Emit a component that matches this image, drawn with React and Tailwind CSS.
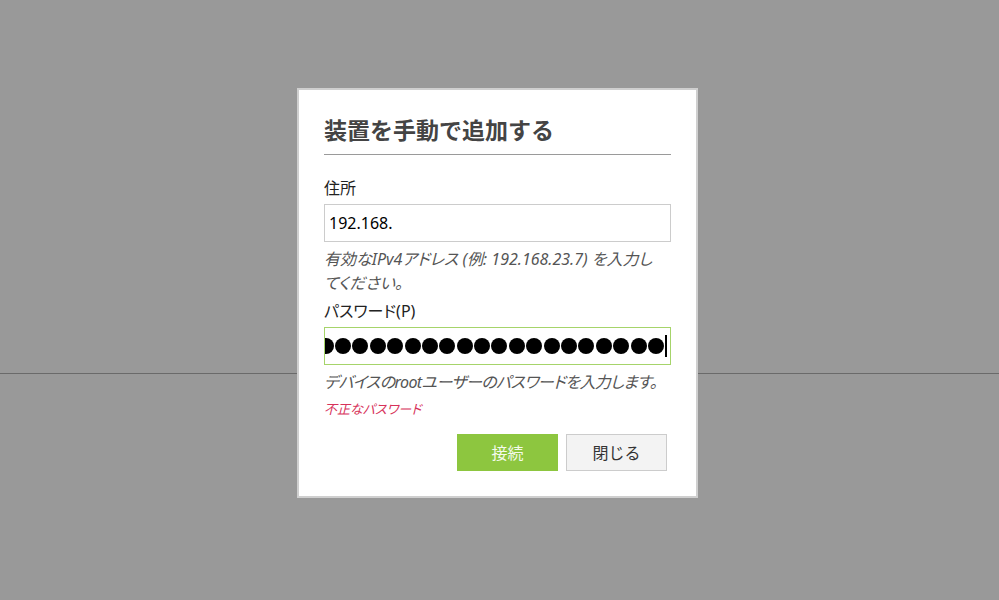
import React from "react";

const font = { fontFamily: '"Noto Sans", "Noto Sans CJK JP", sans-serif' };

const Dots = ({ count }) => (
  <div className="flex items-center gap-[1.4px] shrink-0">
    {Array.from({ length: count }).map((_, i) => (
      <span key={i} className="block w-[16px] h-[16px] rounded-full bg-black shrink-0" />
    ))}
  </div>
);

const App = () => {
  return (
    <div
      className="relative w-full h-[600px] bg-[#999999] overflow-hidden flex flex-col"
      style={font}
    >
      {/* background page */}
      <div className="h-[373px] shrink-0" />
      <div className="border-t border-[#6a6a6a] flex-1" />

      {/* --- DIALOG --- */}
      <div className="absolute left-[297px] top-[88px] w-[401px] h-[410px] bg-white border-2 border-[#cfcfcf]">
        <div className="px-[25px] pt-[24px]">
          <h1 className="text-[23px] leading-[32px] font-semibold text-[#444444] pb-[8px] border-b border-[#9a9a9a]">
            装置を手動で追加する
          </h1>

          <p className="mt-[21px] text-[16px] leading-[24px] text-[#222222]">住所</p>
          <div className="mt-[4px] h-[38px] border border-[#cccccc] flex items-center px-[4px]">
            <span className="text-[16px] text-black">192.168.</span>
          </div>
          <p className="mt-[5px] text-[16px] leading-[24px] italic text-[#555555] whitespace-nowrap [font-feature-settings:'palt']">
            有効なIPv4アドレス (例: 192.168.23.7) を入力し
            <br />
            てください。
          </p>

          <p className="mt-[4px] text-[16px] leading-[24px] text-[#222222] [font-feature-settings:'palt']">パスワード(P)</p>
          <div className="mt-[4px] h-[38px] border border-[#a6d46a] flex items-center justify-end overflow-hidden pl-[4px] pr-[3px]">
            <Dots count={24} />
            <span className="block w-[2px] h-[22px] bg-black ml-[1px] shrink-0" />
          </div>
          <p className="mt-[5px] text-[16px] leading-[24px] italic text-[#555555] whitespace-nowrap tracking-[-0.6px] [font-feature-settings:'palt']">
            デバイスのrootユーザーのパスワードを入力します。
          </p>
          <p className="mt-[5px] text-[13px] leading-[20px] italic text-[#d7325a] [font-feature-settings:'palt']">
            不正なパスワード
          </p>

          <div className="mt-[15px] flex justify-end gap-[8px] pr-[4px]">
            <button className="w-[101px] h-[37px] bg-[#8dc63f] text-[#f4faec] text-[16px]">
              接続
            </button>
            <button className="w-[101px] h-[37px] bg-[#f3f3f3] border border-[#cccccc] text-[#333333] text-[16px]">
              閉じる
            </button>
          </div>
        </div>
      </div>
    </div>
  );
};

export default App;
